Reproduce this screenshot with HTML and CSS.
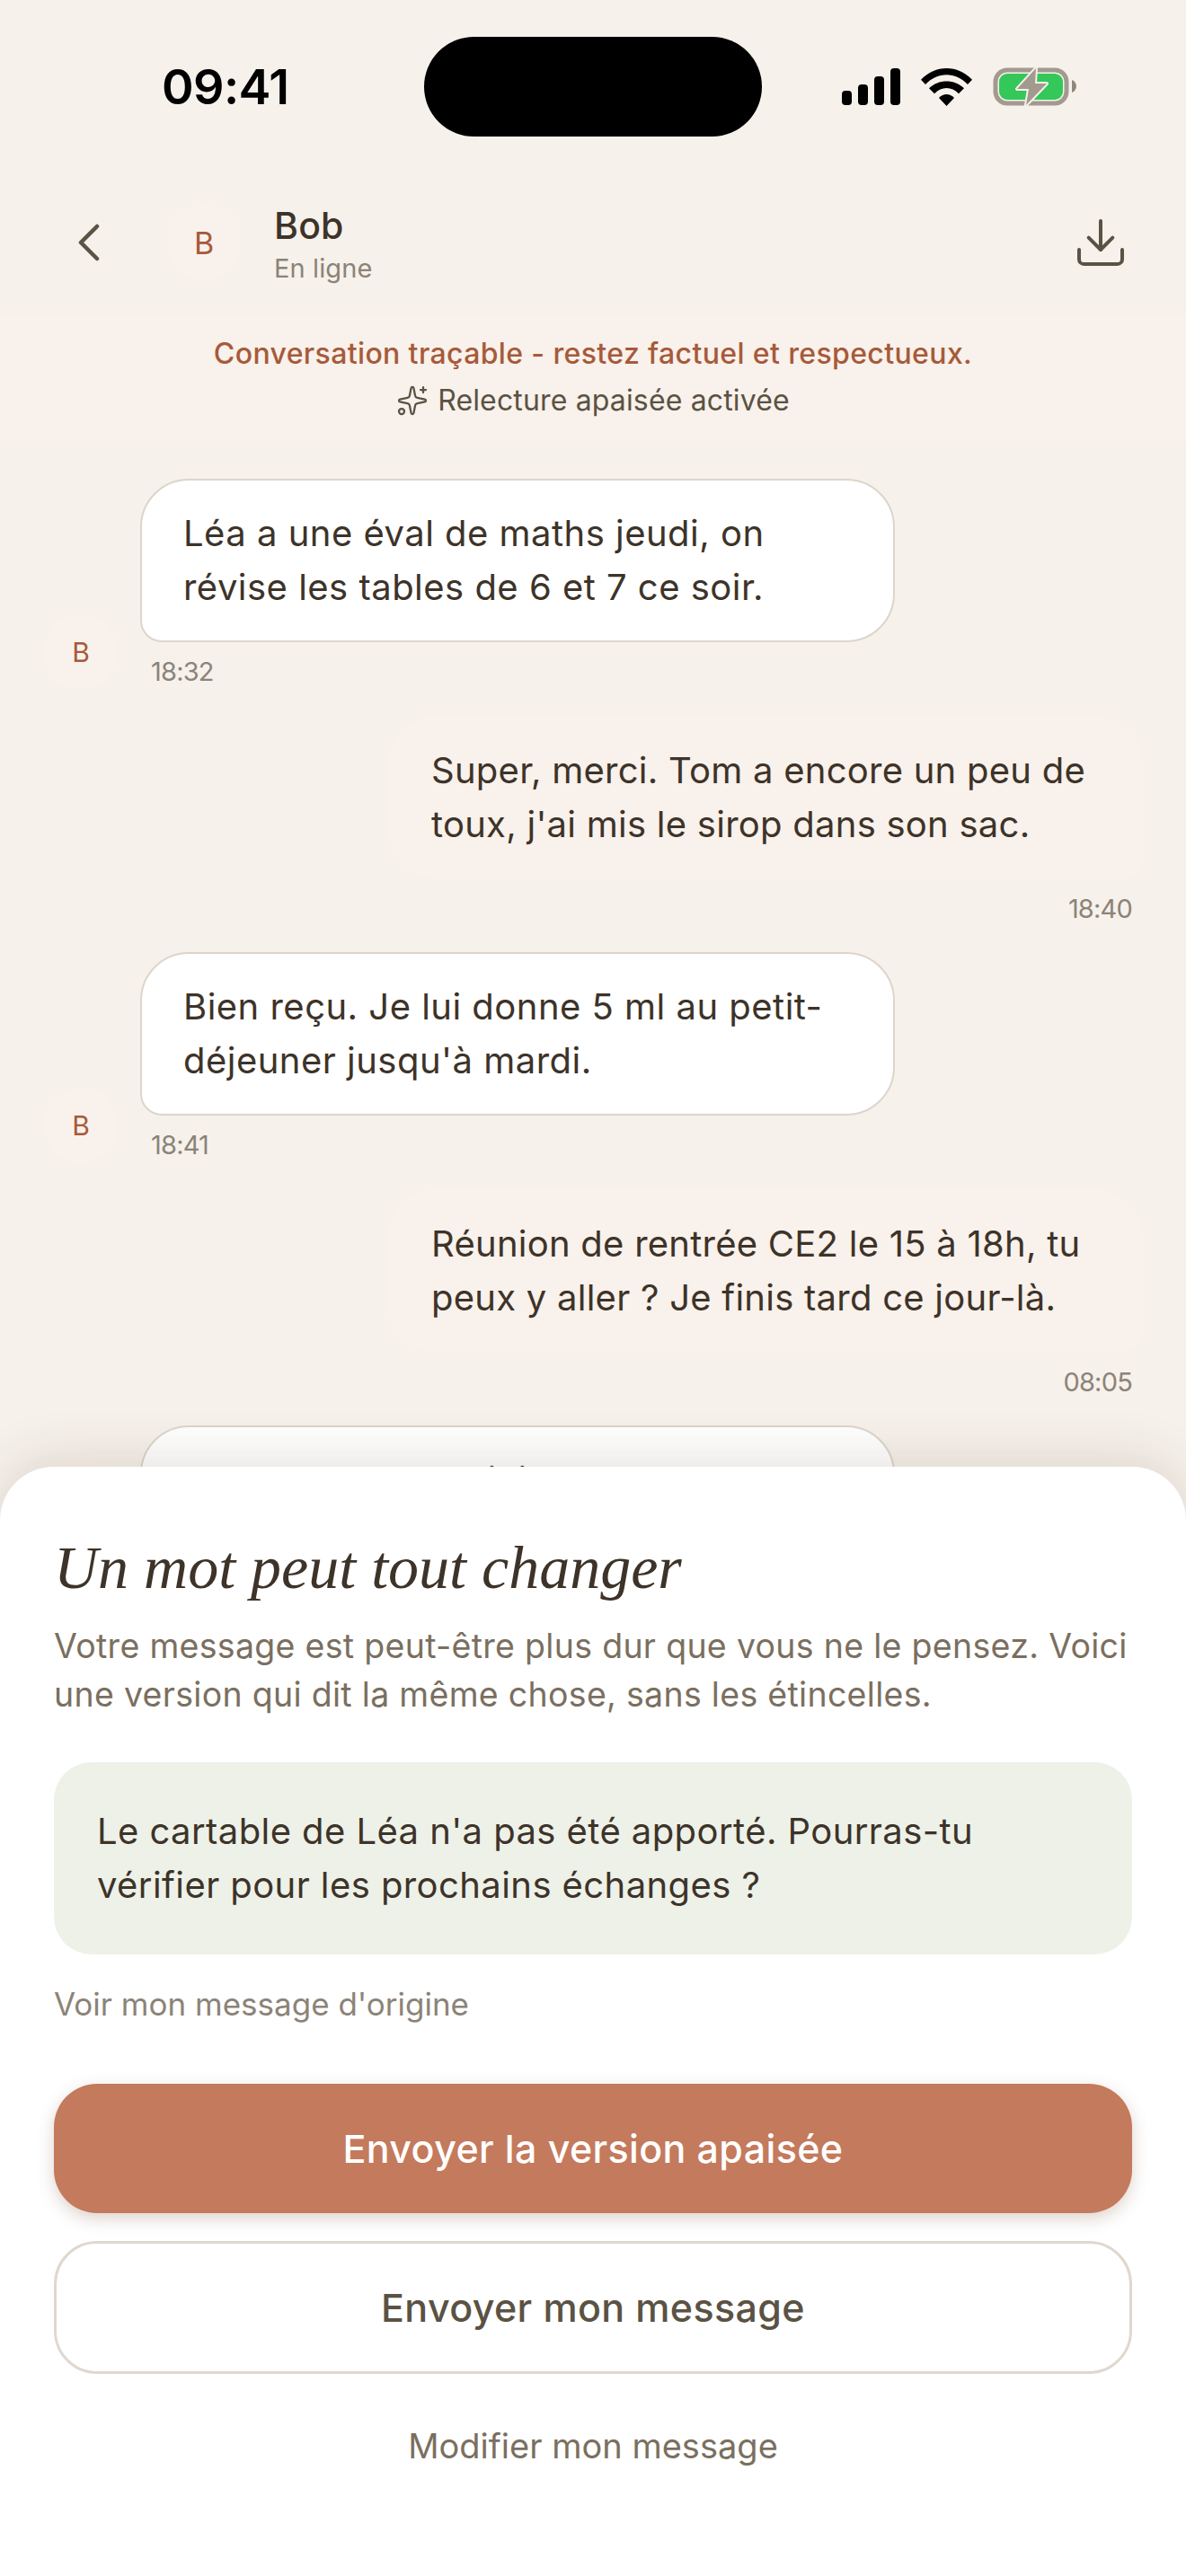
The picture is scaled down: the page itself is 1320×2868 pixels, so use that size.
FILE: index.html
```html
<!DOCTYPE html>
<html lang="fr">
<head>
    <meta charset="UTF-8">
    <title>Conversation avec Bob</title>
    <link rel="stylesheet" href="styles.css">
</head>
<body>
<div class="screen">
    <div class="status-bar">
        <span class="time">09:41</span>
        <div class="island"></div>
        <div class="status-icons">
            <div class="signal">
                <span class="bar bar-1"></span>
                <span class="bar bar-2"></span>
                <span class="bar bar-3"></span>
                <span class="bar bar-4"></span>
            </div>
            <svg class="wifi" width="57" height="42" viewBox="0 0 57 42">
                <path d="M0 12.7C16 -4.2 41 -4.2 57 12.7L52 18C38.500 3.500 18.500 3.500 5 18Z"/>
                <path d="M9 22.300C19.500 11.800 37.500 11.800 48 22.300L42 28.300C34 20 23 20 15 28.300Z"/>
                <path d="M20 33C25 27.700 32 27.700 37 33L28.500 42Z"/>
            </svg>
            <svg class="battery" width="93" height="43" viewBox="0 0 93 43">
                <rect x="3" y="3" width="79" height="37" rx="13" fill="none" stroke="#a39a8f" stroke-width="5"/>
                <rect x="7" y="7" width="71" height="29" rx="9" fill="#34c759"/>
                <path d="M88 14C91 15 93 18 93 21C93 24 91 27 88 28Z" fill="#8f877c"/>
                <path d="M48 1L27 24H40L37 42L60 18H47Z" fill="#a39a8f" stroke="#f6f1eb" stroke-width="4" stroke-linejoin="round" paint-order="stroke"/>
            </svg>
        </div>
    </div>

    <header class="chat-header">
        <svg class="back-icon" width="72" height="72" viewBox="0 0 24 24">
            <path d="m15 18-6-6 6-6"/>
        </svg>
        <div class="avatar avatar-header">B</div>
        <div class="contact">
            <div class="contact-name">Bob</div>
            <div class="contact-state">En ligne</div>
        </div>
        <svg class="download-icon" width="64" height="64" viewBox="0 0 24 24">
            <path d="M21 15v4a2 2 0 0 1-2 2H5a2 2 0 0 1-2-2v-4"/>
            <path d="m7 10 5 5 5-5"/>
            <path d="M12 15V3"/>
        </svg>
    </header>

    <div class="banner">
        <div class="banner-warning">Conversation traçable - restez factuel et respectueux.</div>
        <div class="banner-review">
            <svg class="sparkle-icon" width="36" height="36" viewBox="0 0 24 24">
                <path d="M11.017 2.814a1 1 0 0 1 1.966 0l1.051 5.558a2 2 0 0 0 1.594 1.594l5.558 1.051a1 1 0 0 1 0 1.966l-5.558 1.051a2 2 0 0 0-1.594 1.594l-1.051 5.558a1 1 0 0 1-1.966 0l-1.051-5.558a2 2 0 0 0-1.594-1.594l-5.558-1.051a1 1 0 0 1 0-1.966l5.558-1.051a2 2 0 0 0 1.594-1.594z"/>
                <path d="M20 2v4"/>
                <path d="M22 4h-4"/>
                <circle cx="4" cy="20" r="2"/>
            </svg>
            <span>Relecture apaisée activée</span>
        </div>
    </div>

    <div class="messages">
        <div class="row row-in">
            <div class="avatar avatar-small">B</div>
            <div class="msg">
                <div class="bubble bubble-in">Léa a une éval de maths jeudi, on<br>révise les tables de 6 et 7 ce soir.</div>
                <div class="msg-time">18:32</div>
            </div>
        </div>
        <div class="row row-out">
            <div class="msg">
                <div class="bubble bubble-out">Super, merci. Tom a encore un peu de<br>toux, j'ai mis le sirop dans son sac.</div>
                <div class="msg-time">18:40</div>
            </div>
        </div>
        <div class="row row-in">
            <div class="avatar avatar-small">B</div>
            <div class="msg">
                <div class="bubble bubble-in">Bien reçu. Je lui donne 5 ml au petit-<br>déjeuner jusqu'à mardi.</div>
                <div class="msg-time">18:41</div>
            </div>
        </div>
        <div class="row row-out">
            <div class="msg">
                <div class="bubble bubble-out">Réunion de rentrée CE2 le 15 à 18h, tu<br>peux y aller ? Je finis tard ce jour-là.</div>
                <div class="msg-time">08:05</div>
            </div>
        </div>
        <div class="row row-in">
            <div class="avatar avatar-small"></div>
            <div class="msg">
                <div class="bubble bubble-in">Non, pas de souci, je le note.</div>
            </div>
        </div>
    </div>

    <div class="sheet">
        <h2 class="sheet-title">Un mot peut tout changer</h2>
        <p class="sheet-text">Votre message est peut-être plus dur que vous ne le pensez. Voici<br>une version qui dit la même chose, sans les étincelles.</p>
        <div class="suggestion">Le cartable de Léa n'a pas été apporté. Pourras-tu<br>vérifier pour les prochains échanges ?</div>
        <div class="original-link">Voir mon message d'origine</div>
        <button class="btn btn-primary">Envoyer la version apaisée</button>
        <button class="btn btn-secondary">Envoyer mon message</button>
        <div class="edit-link">Modifier mon message</div>
    </div>
</div>
</body>
</html>
```

FILE: styles.css
```css
* {
    box-sizing: border-box;
}
body {
    margin: 0;
    font-family: Inter, "Noto Sans", sans-serif;
    background-color: #f6f1eb;
    color: #3d3329;
}
.screen {
    position: relative;
    width: 1320px;
    height: 2868px;
    overflow: hidden;
}

/* status bar */
.status-bar {
    height: 190px;
    padding: 41px 0 0 180px;
    display: flex;
    align-items: flex-start;
}
.time {
    width: 140px;
    height: 111px;
    line-height: 111px;
    font-size: 54px;
    font-weight: 600;
    letter-spacing: -0.6px;
    color: #000;
}
.island {
    width: 376px;
    height: 111px;
    margin-left: 152px;
    border-radius: 56px;
    background: #000;
}
.status-icons {
    width: 261px;
    height: 111px;
    margin-left: 89px;
    display: flex;
    align-items: center;
    justify-content: space-between;
}
.signal {
    display: flex;
    align-items: flex-end;
    gap: 7px;
    height: 41px;
}
.bar {
    width: 11px;
    border-radius: 4px;
    background: #000;
}
.bar-1 { height: 16px; }
.bar-2 { height: 23px; }
.bar-3 { height: 32px; }
.bar-4 { height: 41px; }

/* header */
.chat-header {
    height: 160px;
    padding: 0 63px 0 63px;
    display: flex;
    align-items: center;
}
.back-icon, .download-icon, .sparkle-icon {
    fill: none;
    stroke: #5a5244;
    stroke-width: 1.5;
    stroke-linecap: round;
    stroke-linejoin: round;
}
.avatar {
    display: flex;
    align-items: center;
    justify-content: center;
    width: 84px;
    height: 84px;
    flex-shrink: 0;
    border-radius: 50%;
    background: #f9f1eb;
    color: #a65a3a;
}
.avatar-header {
    margin-left: 50px;
    font-size: 34px;
}
.avatar-small {
    margin-bottom: 2px;
    font-size: 30px;
}
.contact {
    margin-left: 36px;
    padding-top: 3px;
    flex: 1;
}
.contact-name {
    font-size: 41px;
    line-height: 54px;
    font-weight: 500;
    letter-spacing: 0.2px;
}
.contact-state {
    font-size: 29px;
    line-height: 42px;
    letter-spacing: 0.1px;
    color: #8c8378;
}

/* banner */
.banner {
    padding: 18px 0;
    background: #f9f1eb;
    text-align: center;
    font-size: 32px;
    line-height: 52px;
}
.banner-warning {
    color: #a65a3a;
    font-weight: 500;
    letter-spacing: 0.37px;
}
.banner-review {
    display: flex;
    align-items: center;
    justify-content: center;
    gap: 10px;
    letter-spacing: 0.15px;
    color: #5a5244;
}

/* messages */
.messages {
    padding: 43px 48px 0;
    display: flex;
    flex-direction: column;
    gap: 26.5px;
}
.row {
    display: flex;
    align-items: flex-end;
    gap: 24px;
}
.row-out {
    justify-content: flex-end;
}
.msg {
    width: 840px;
}
.bubble {
    padding: 29px 46px;
    border: 2px solid transparent;
    border-radius: 54px;
    font-size: 40px;
    line-height: 60px;
    letter-spacing: 0.48px;
}
.bubble-in {
    background: #fff;
    border-color: #ddd5cb;
    border-bottom-left-radius: 24px;
}
.bubble-out {
    background: #f9f1eb;
    border-color: #f9f1eb;
    border-bottom-right-radius: 24px;
    letter-spacing: 0.25px;
}
.msg-time {
    margin-top: 10px;
    padding: 0 12px;
    font-size: 29px;
    line-height: 45px;
    letter-spacing: -0.8px;
    color: #8c8378;
}
.row-out .msg-time {
    text-align: right;
}

/* bottom sheet */
.sheet {
    position: absolute;
    left: 0;
    right: 0;
    bottom: 0;
    height: 1235px;
    padding: 70px 60px 0;
    background: #fff;
    border-radius: 60px 60px 0 0;
    box-shadow: 0 -8px 60px rgba(70, 50, 30, 0.14);
}
.sheet-title {
    margin: 0;
    font-family: "Liberation Serif", serif;
    font-style: italic;
    font-weight: 400;
    font-size: 68px;
    line-height: 84px;
}
.sheet-text {
    margin: 19px 0 0;
    font-size: 37.5px;
    line-height: 54px;
    letter-spacing: 0.3px;
    color: #7a6f60;
}
.suggestion {
    margin-top: 48px;
    padding: 47px 48px;
    border-radius: 42px;
    background: #edf1e8;
    font-size: 40px;
    line-height: 60px;
    letter-spacing: 0.42px;
}
.original-link {
    margin-top: 32px;
    font-size: 35px;
    line-height: 46px;
    color: #8c8378;
}
.btn {
    display: block;
    width: 100%;
    border-radius: 48px;
    font-family: inherit;
    font-size: 43px;
    font-weight: 500;
    letter-spacing: 0.36px;
}
.btn-primary {
    margin-top: 66px;
    height: 144px;
    border: none;
    background: #c47a5c;
    color: #fff;
    box-shadow: 0 6px 18px rgba(120, 80, 50, 0.25);
}
.btn-secondary {
    margin-top: 31px;
    height: 148px;
    border: 3px solid #e0d8ce;
    background: #fff;
    color: #5a5244;
}
.edit-link {
    margin-top: 54px;
    text-align: center;
    font-size: 38px;
    line-height: 52px;
    color: #7a6f60;
}
```
